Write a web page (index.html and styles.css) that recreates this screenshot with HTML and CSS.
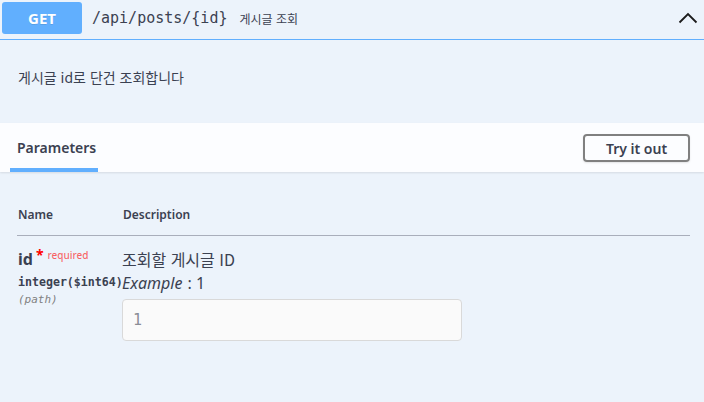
FILE: index.html
```html
<!DOCTYPE html>
<html lang="ko">
<head>
<meta charset="utf-8">
<link rel="stylesheet" href="styles.css">
</head>
<body>
<div class="opblock">
  <div class="summary">
    <span class="method">GET</span>
    <span class="path">/api/posts/{id}</span>
    <span class="summary-desc">게시글 조회</span>
    <svg class="chevron" width="20" height="12" viewBox="0 0 20 12"><path d="M1.5 10.5 L10 2 L18.5 10.5" fill="none" stroke="#1b1b1b" stroke-width="1.8"/></svg>
  </div>
  <div class="body">
    <div class="desc">게시글 id로 단건 조회합니다</div>
    <div class="section-header">
      <div class="tab">Parameters</div>
      <button class="try">Try it out</button>
    </div>
    <div class="params">
      <div class="row head">
        <div class="col-name">Name</div>
        <div class="col-desc">Description</div>
      </div>
      <div class="row param">
        <div class="col-name">
          <div class="pname">id<span class="star">*</span><span class="req">required</span></div>
          <div class="ptype">integer($int64)</div>
          <div class="pin">(path)</div>
        </div>
        <div class="col-desc">
          <div class="pdesc">조회할 게시글 ID</div>
          <div class="example"><i>Example</i> : 1</div>
          <input class="field" type="text" placeholder="1">
        </div>
      </div>
    </div>
  </div>
</div>
</body>
</html>
```

FILE: styles.css
```css
html, body {
  margin: 0;
  padding: 0;
  background: #ecf3fb;
  width: 704px;
  height: 402px;
  overflow: hidden;
}
body {
  font-family: "Noto Sans", "Noto Sans CJK KR", sans-serif;
  color: #3b4151;
}
.summary {
  display: flex;
  align-items: center;
  padding: 2px 6px 5px 2px;
  border-bottom: 1px solid #61affe;
  height: 32px;
}
.method {
  width: 80px;
  height: 32px;
  background: #61affe;
  color: #fff;
  border-radius: 3px;
  font-weight: 700;
  font-size: 15px;
  display: flex;
  align-items: center;
  justify-content: center;
  text-shadow: 0 1px 0 rgba(0,0,0,.1);
}
.path {
  margin-left: 10px;
  font-family: "DejaVu Sans Mono", monospace;
  font-size: 15px;
  font-weight: 400;
  color: #3b4151;
}
.summary-desc {
  margin-left: 12px;
  font-size: 12px;
  color: #3b4151;
  flex: 1;
  font-family: "Noto Sans CJK KR", sans-serif;
}
.desc {
  padding: 27px 18px 0;
  height: 56px;
  font-size: 14px;
  font-family: "Noto Sans CJK KR", sans-serif;
}
.section-header {
  display: flex;
  align-items: center;
  justify-content: space-between;
  background: rgba(255,255,255,.82);
  height: 49px;
  padding: 0 14px 0 10px;
  box-shadow: 0 1px 2px rgba(0,0,0,.1);
}
.tab {
  align-self: stretch;
  display: flex;
  align-items: center;
  padding: 4px 7px 0;
  font-size: 14px;
  font-weight: 600;
  border-bottom: 4px solid #61affe;
  box-sizing: border-box;
  width: 88px;
}
.try {
  width: 107px;
  height: 28px;
  margin-top: 1px;
  border: 2px solid #808080;
  border-radius: 4px;
  background: transparent;
  font-family: "Noto Sans", sans-serif;
  font-weight: 600;
  font-size: 14px;
  color: #3b4151;
  box-shadow: 0 1px 2px rgba(0,0,0,.1);
  padding: 0;
}
.params {
  padding: 0 14px 0 17px;
}
.row {
  display: flex;
}
.col-name {
  width: 105px;
  flex: none;
}
.col-desc {
  flex: 1;
}
.head {
  padding-top: 34px;
  height: 29px;
  font-size: 12px;
  font-weight: 600;
  border-bottom: 1px solid #a9aebb;
  align-items: flex-start;
}
.head .col-name { padding-left: 1px; }
.param {
  padding-top: 13px;
}
.pname {
  font-size: 16px;
  font-weight: 700;
  padding-left: 1px;
  line-height: 20px;
}
.star {
  color: #ff0000;
  font-size: 14px;
  position: relative;
  top: -5px;
  margin-left: 3px;
}
.req {
  color: rgba(255,0,0,.6);
  font-size: 10px;
  font-weight: 500;
  position: relative;
  top: -6px;
  margin-left: 4px;
}
.ptype {
  font-family: "DejaVu Sans Mono", monospace;
  font-size: 11.6px;
  font-weight: 600;
  padding-left: 1px;
  margin-top: 4px;
  white-space: nowrap;
}
.pin {
  font-family: "DejaVu Sans Mono", monospace;
  font-size: 11px;
  font-style: italic;
  color: #808080;
  font-weight: 400;
  padding-left: 1px;
  margin-top: 4px;
}
.pdesc {
  font-size: 16px;
  line-height: 20px;
  font-family: "Noto Sans CJK KR", sans-serif;
}
.example {
  font-size: 16px;
  margin-top: 4px;
  line-height: 20px;
}
.example i { margin-right: 1px; }
.field {
  display: block;
  box-sizing: border-box;
  width: 340px;
  height: 42px;
  margin-top: 6px;
  border: 1px solid #d9d9d9;
  border-radius: 4px;
  background: #fafafa;
  padding: 0 10px;
  font-family: "DejaVu Sans Mono", monospace;
  font-size: 15px;
}
.field::placeholder { color: #8a8d96; }
```
